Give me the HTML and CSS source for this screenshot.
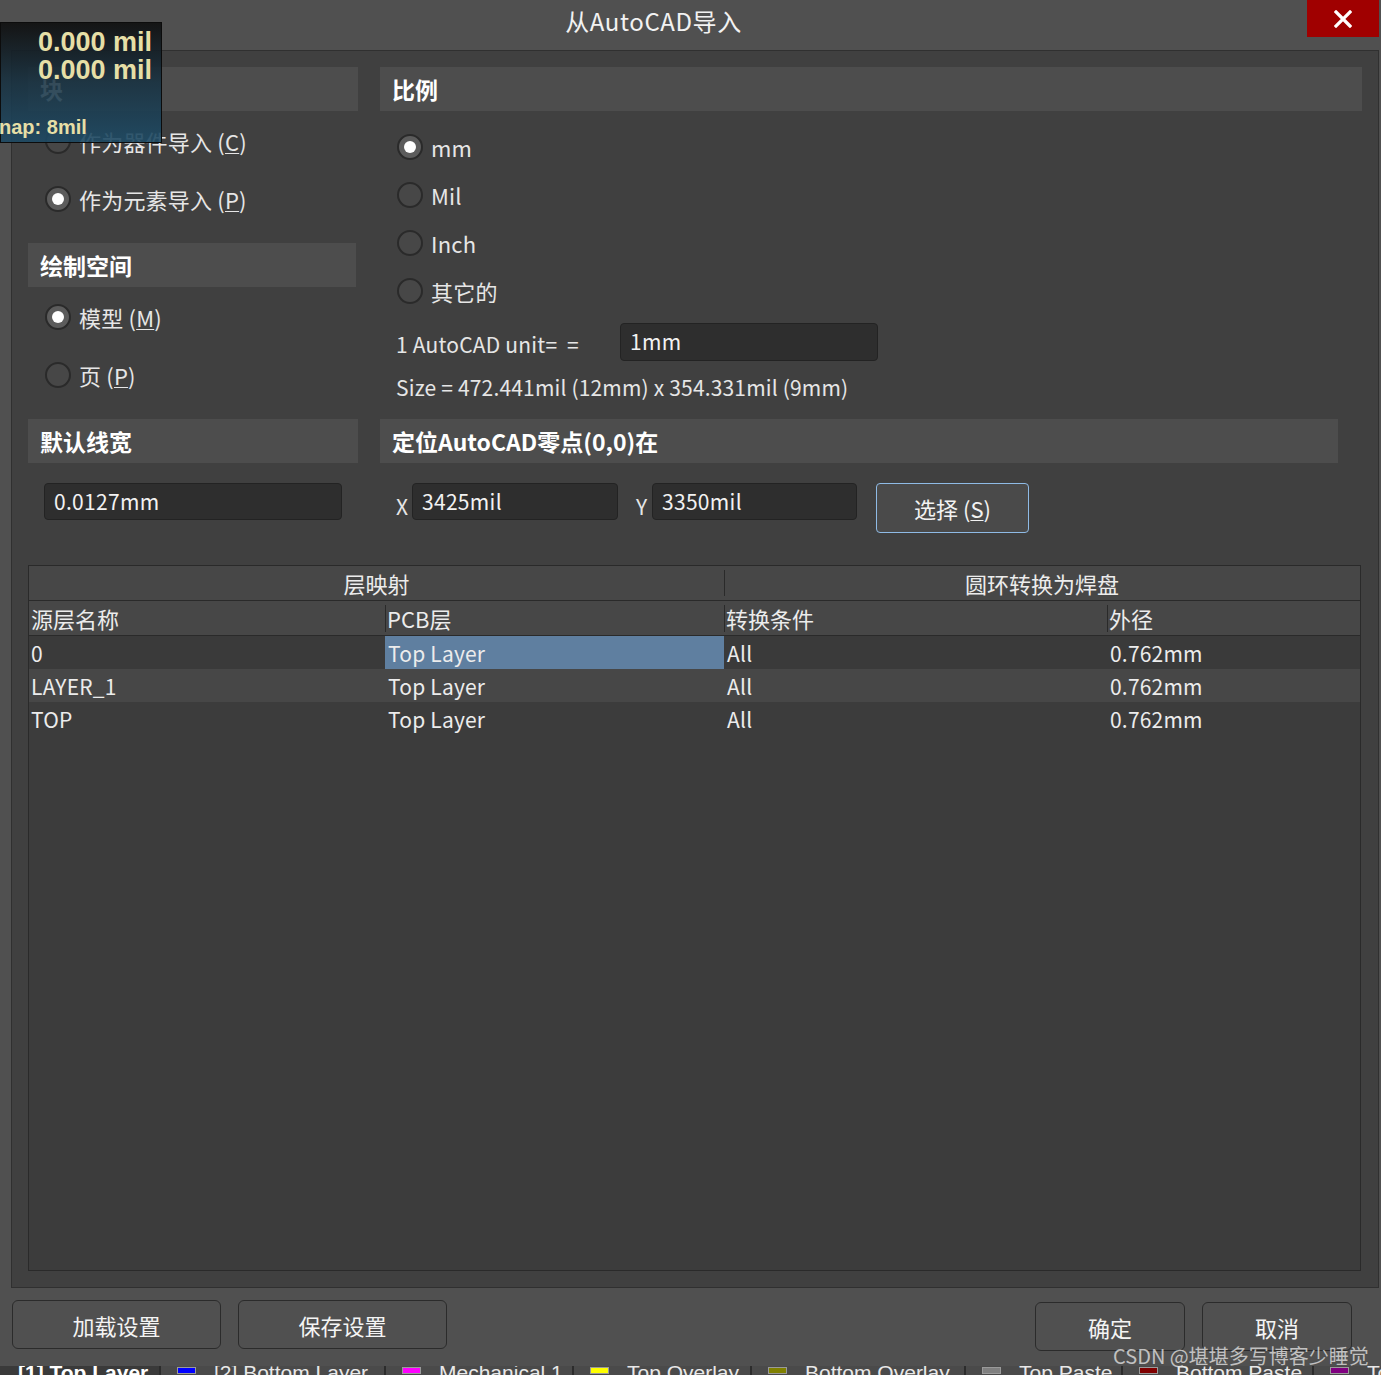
FILE: index.html
```html
<!DOCTYPE html>
<html lang="zh-CN">
<head>
<meta charset="utf-8">
<title>从AutoCAD导入</title>
<link rel="stylesheet" href="styles.css">
</head>
<body>
<header class="titlebar">
  <div class="title">从AutoCAD导入</div>
  <button class="close" aria-label="close">
    <svg width="18" height="18" viewBox="0 0 18 18"><path d="M2 2 L16 16 M16 2 L2 16" stroke="#fff" stroke-width="3.2" stroke-linecap="square"/></svg>
  </button>
</header>

<main class="panel">
  <div class="top-grid">
    <section class="cell">
      <div class="sec-head">块</div>
      <div class="radio-list left-a">
        <label class="radio-row"><span class="radio"></span>作为器件导入 (<u>C</u>)</label>
        <label class="radio-row"><span class="radio on"></span>作为元素导入 (<u>P</u>)</label>
      </div>
      <div class="sec-head w328">绘制空间</div>
      <div class="radio-list left-b">
        <label class="radio-row"><span class="radio on"></span>模型 (<u>M</u>)</label>
        <label class="radio-row"><span class="radio"></span>页 (<u>P</u>)</label>
      </div>
    </section>

    <section class="cell">
      <div class="sec-head">比例</div>
      <div class="radio-list right-a">
        <label class="radio-row r48"><span class="radio on"></span>mm</label>
        <label class="radio-row r48"><span class="radio"></span>Mil</label>
        <label class="radio-row r48"><span class="radio"></span>Inch</label>
        <label class="radio-row r48"><span class="radio"></span>其它的</label>
      </div>
      <div class="unit-row">
        <span class="unit-label">1 AutoCAD unit= &nbsp;=</span>
        <div class="field unit-field">1mm</div>
      </div>
      <div class="size-line">Size = 472.441mil (12mm) x 354.331mil (9mm)</div>
    </section>

    <section class="cell">
      <div class="sec-head">默认线宽</div>
      <div class="lw-wrap"><div class="field lw-field">0.0127mm</div></div>
    </section>

    <section class="cell">
      <div class="sec-head w958">定位AutoCAD零点(0,0)在</div>
      <div class="origin-row">
        <span class="axis">X</span>
        <div class="field xy-field">3425mil</div>
        <span class="axis axis-y">Y</span>
        <div class="field xy-field">3350mil</div>
        <button class="select-btn">选择 (<u>S</u>)</button>
      </div>
    </section>
  </div>

  <div class="table">
    <div class="group-row">
      <div class="g1">层映射</div>
      <div class="g2">圆环转换为焊盘</div>
    </div>
    <div class="head-row cols">
      <div class="c1">源层名称</div>
      <div class="c2 div">PCB层</div>
      <div class="c3 div">转换条件</div>
      <div class="c4 div">外径</div>
    </div>
    <div class="data-row cols dark">
      <div class="c1">0</div>
      <div class="c2 sel">Top Layer</div>
      <div class="c3">All</div>
      <div class="c4">0.762mm</div>
    </div>
    <div class="data-row cols light">
      <div class="c1">LAYER_1</div>
      <div class="c2">Top Layer</div>
      <div class="c3">All</div>
      <div class="c4">0.762mm</div>
    </div>
    <div class="data-row cols mid">
      <div class="c1">TOP</div>
      <div class="c2">Top Layer</div>
      <div class="c3">All</div>
      <div class="c4">0.762mm</div>
    </div>
  </div>
</main>

<footer class="footer">
  <button class="btn wide">加载设置</button>
  <button class="btn wide">保存设置</button>
  <div class="spacer"></div>
  <button class="btn narrow">确定</button>
  <button class="btn narrow">取消</button>
</footer>

<div class="layer-strip">
  <div class="tab first t161"><span class="tab-text bold">[1] Top Layer</span></div>
  <div class="tab t225"><span class="sw" style="background:#0000ff"></span><span class="tab-text">[2] Bottom Layer</span></div>
  <div class="tab t188"><span class="sw" style="background:#ff00ff"></span><span class="tab-text">Mechanical 1</span></div>
  <div class="tab t178"><span class="sw" style="background:#ffff00"></span><span class="tab-text">Top Overlay</span></div>
  <div class="tab t214"><span class="sw" style="background:#808000"></span><span class="tab-text">Bottom Overlay</span></div>
  <div class="tab t157"><span class="sw" style="background:#808080"></span><span class="tab-text">Top Paste</span></div>
  <div class="tab t191"><span class="sw" style="background:#800000"></span><span class="tab-text">Bottom Paste</span></div>
  <div class="tab last"><span class="sw" style="background:#800080"></span><span class="tab-text">Top Solder</span></div>
</div>

<div class="hud">
  <div class="hud-val">0.000 mil</div>
  <div class="hud-val">0.000 mil</div>
  <div class="hud-snap">nap: 8mil</div>
</div>

<div class="watermark">CSDN @堪堪多写博客少睡觉</div>
</body>
</html>
```

FILE: styles.css
```css
html, body {
  margin: 0;
  padding: 0;
}
body {
  width: 1381px;
  height: 1375px;
  overflow: hidden;
  position: relative;
  background: #505050;
  color: #e6e6e6;
  font-family: "Noto Sans CJK SC", "Noto Sans", sans-serif;
  font-size: 21px;
}
u { text-decoration: underline; text-underline-offset: 2px; text-decoration-thickness: 1px; }

/* title bar */
.titlebar {
  height: 50px;
  display: flex;
  align-items: flex-start;
}
.title {
  flex: 1;
  text-align: center;
  font-size: 24px;
  line-height: 42px;
  letter-spacing: 0.6px;
  color: #f2f2f2;
}
.close {
  width: 72px;
  height: 37px;
  margin-right: 2px;
  padding: 0;
  border: 0;
  background: #a00000;
  display: flex;
  align-items: center;
  justify-content: center;
}

/* panel */
.panel {
  margin-left: 11px;
  width: 1368px;
  height: 1238px;
  box-sizing: border-box;
  border: 1px solid #303030;
  background: #404040;
  display: flex;
  flex-direction: column;
  padding-bottom: 16px;
}
.top-grid {
  display: grid;
  grid-template-columns: 330px 982px;
  grid-template-rows: 352px auto;
  column-gap: 22px;
  padding: 16px 0 0 16px;
}
.cell {
  display: flex;
  flex-direction: column;
}
.sec-head {
  height: 44px;
  line-height: 44px;
  background: #4d4d4d;
  padding-left: 12px;
  font-size: 23px;
  font-weight: 700;
  color: #ffffff;
}
.sec-head.w328 { width: 316px; }
.sec-head.w958 { width: 946px; }

.radio-list { display: flex; flex-direction: column; }
.left-a { padding: 1px 0 15px; }
.left-b { padding: 1px 0 15px; }
.right-a { padding-top: 12px; }
.radio-row {
  display: flex;
  align-items: center;
  height: 58px;
  font-size: 22px;
  letter-spacing: 0.2px;
  color: #e6e6e6;
}
.radio-row.r48 { height: 48px; }
.radio {
  width: 26px;
  height: 26px;
  box-sizing: border-box;
  border-radius: 50%;
  border: 2px solid #2a2a2a;
  background: #474747;
  margin: 0 8px 0 17px;
  display: flex;
  align-items: center;
  justify-content: center;
  flex: none;
}
.radio.on { background: #5c5c5c; }
.radio.on::after {
  content: "";
  width: 12px;
  height: 12px;
  border-radius: 50%;
  background: #ffffff;
}

.field {
  height: 38px;
  box-sizing: border-box;
  background: #2e2e2e;
  border: 1px solid #232323;
  border-radius: 4px;
  color: #f2f2f2;
  font-size: 21px;
  line-height: 34px;
  padding-left: 9px;
  letter-spacing: 0.3px;
}
.unit-row {
  display: flex;
  align-items: center;
  margin-top: 8px;
}
.unit-label {
  width: 224px;
  padding-left: 16px;
  font-size: 21px;
  padding-top: 4px;
  letter-spacing: 0.2px;
}
.unit-field { width: 258px; }
.size-line {
  margin-top: 13px;
  padding-left: 16px;
  line-height: 26px;
  font-size: 21px;
  letter-spacing: 0.17px;
}

.lw-wrap { padding: 20px 0 0 16px; }
.lw-field { width: 298px; height: 37px; }

.origin-row {
  display: flex;
  align-items: flex-start;
  padding: 20px 0 0 16px;
}
.axis {
  width: 16px;
  font-size: 21px;
  line-height: 37px;
  padding-top: 5px;
}
.axis-y { margin-left: 18px; }
.xy-field { height: 37px; width: 206px; }
.xy-field + .axis-y + .xy-field { width: 205px; }
.select-btn {
  margin-left: 19px;
  width: 153px;
  height: 50px;
  box-sizing: border-box;
  background: #4a4a4a;
  border: 1.5px solid #8fbbe6;
  border-radius: 4px;
  color: #f2f2f2;
  font-family: inherit;
  font-size: 22px;
  padding: 0;
}

/* table */
.table {
  margin: 32px 0 0 16px;
  width: 1333px;
  flex: 1;
  box-sizing: border-box;
  border: 1px solid #2a2a2a;
  background: #3c3c3c;
  display: flex;
  flex-direction: column;
}
.group-row {
  display: grid;
  grid-template-columns: 695px 636px;
  height: 34px;
  background: #474747;
  border-bottom: 1px solid #2a2a2a;
}
.group-row > div {
  text-align: center;
  font-size: 22px;
  line-height: 34px;
  color: #ececec;
}
.g2 {
  background: linear-gradient(#2a2a2a, #2a2a2a) left center / 1px 26px no-repeat;
}
.cols {
  display: grid;
  grid-template-columns: 356px 339px 383px 253px;
}
.head-row {
  height: 34px;
  background: #474747;
  border-bottom: 1px solid #2a2a2a;
}
.head-row > div {
  font-size: 22px;
  line-height: 34px;
  padding-left: 2px;
  color: #ececec;
}
.head-row > .div {
  background: linear-gradient(#2a2a2a, #2a2a2a) left center / 1px 27px no-repeat;
}
.data-row { height: 33px; }
.data-row > div {
  font-size: 21px;
  line-height: 34px;
  padding-left: 3px;
  letter-spacing: 0.2px;
  color: #ececec;
}
.data-row > .c1 { padding-left: 2px; }
.data-row.dark { background: #3a3a3a; }
.data-row.light { background: #474747; }
.data-row.mid { background: #3c3c3c; }
.data-row > .sel { background: #5f7fa0; }

/* footer */
.footer {
  height: 78px;
  box-sizing: border-box;
  display: flex;
  align-items: flex-start;
  gap: 17px;
  padding: 12px 29px 0 12px;
}
.spacer { flex: 1; }
.btn {
  height: 49px;
  box-sizing: border-box;
  background: #505050;
  border: 1.5px solid #2b2b2b;
  border-radius: 6px;
  color: #f4f4f4;
  font-family: inherit;
  font-size: 22px;
  padding: 0;
}
.btn.wide { width: 209px; }
.btn.narrow { width: 150px; margin-top: 2px; }

/* underlying layer tabs (cut off by the window edge) */
.layer-strip {
  height: 9px;
  overflow: hidden;
  display: flex;
  background: #4a4a4a;
}
.tab {
  display: flex;
  align-items: flex-start;
  box-sizing: border-box;
  padding-left: 16px;
  border-right: 2px solid #2c2c2c;
  flex: none;
  overflow: hidden;
}
.t161 { width: 161px; }
.t225 { width: 225px; }
.t188 { width: 188px; }
.t178 { width: 178px; }
.t214 { width: 214px; }
.t157 { width: 157px; }
.t191 { width: 191px; }
.tab.last { flex: 1; border-right: 0; }
.tab.first {
  background: #3a3a3a;
  padding-left: 18px;
}
.tab-text {
  font-family: "Liberation Sans", sans-serif;
  font-size: 21px;
  line-height: 21px;
  margin-top: -4px;
  color: #e8e8e8;
  white-space: nowrap;
}
.tab-text.bold { font-weight: 700; color: #fff; }
.sw {
  width: 17px;
  height: 5px;
  border: 1px solid #9a9a9a;
  margin: 1px 18px 0 0;
  flex: none;
}

/* HUD overlay over the dialog */
.hud {
  position: absolute;
  left: 0;
  top: 22px;
  width: 162px;
  height: 121px;
  box-sizing: border-box;
  border: 1px solid #0c0c0c;
  background: linear-gradient(180deg, rgba(16,16,16,0.93) 0%, rgba(24,50,66,0.88) 50%, rgba(30,74,100,0.9) 100%);
  font-family: "Liberation Sans", sans-serif;
  font-weight: 700;
  color: #e6dfa6;
}
.hud-val {
  text-align: right;
  padding-right: 9px;
  font-size: 27px;
  line-height: 28px;
}
.hud-val:first-child { margin-top: 5px; }
.hud-snap {
  margin-top: 32px;
  margin-left: -2px;
  font-size: 20px;
  line-height: 22px;
}

.watermark {
  position: absolute;
  left: 1113px;
  top: 1341px;
  font-size: 20px;
  color: rgba(225,225,225,0.78);
  white-space: nowrap;
}
```
